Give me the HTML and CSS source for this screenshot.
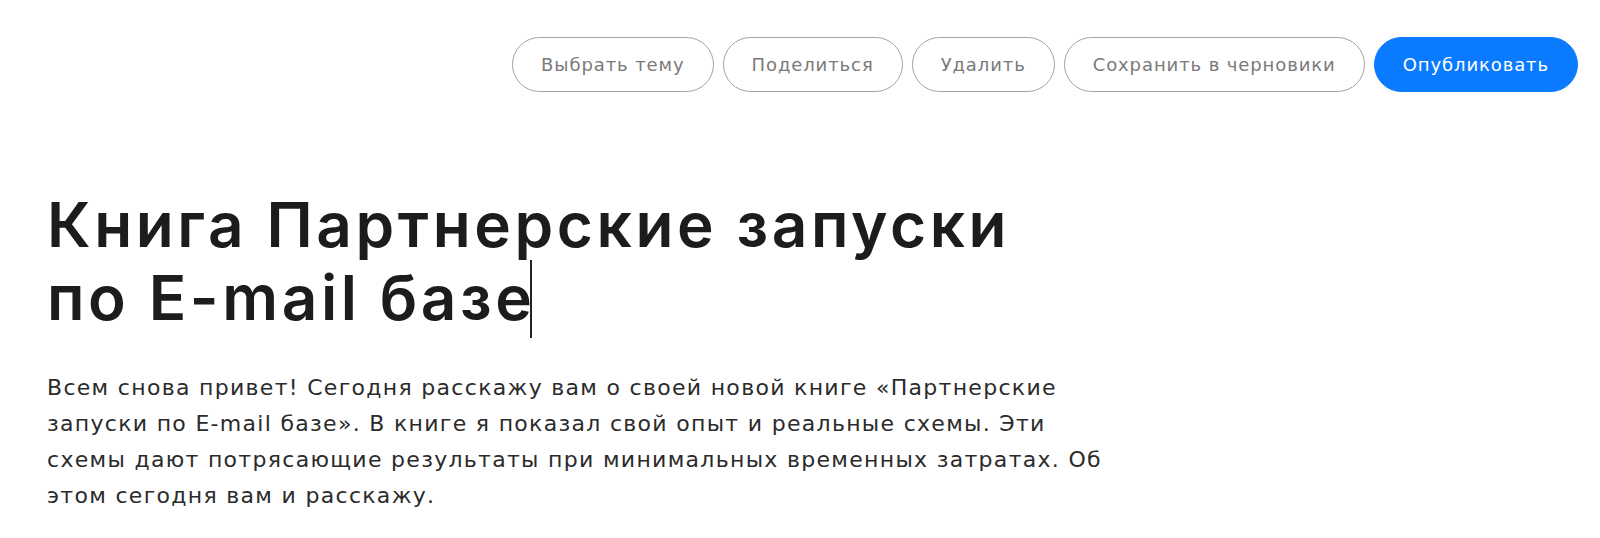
FILE: index.html
```html
<!DOCTYPE html>
<html lang="ru">
<head>
<meta charset="utf-8">
<title>Редактор</title>
<link rel="stylesheet" href="styles.css">
</head>
<body>
<header class="toolbar">
  <button class="btn">Выбрать тему</button>
  <button class="btn">Поделиться</button>
  <button class="btn">Удалить</button>
  <button class="btn">Сохранить в черновики</button>
  <button class="btn btn-primary">Опубликовать</button>
</header>
<main class="article">
  <h1 class="title">Книга Партнерские запуски<br>по E-mail базе<span class="caret"></span></h1>
  <p class="lead">Всем снова привет! Сегодня расскажу вам о своей новой книге «Партнерские запуски по E-mail базе». В книге я показал свой опыт и реальные схемы. Эти схемы дают потрясающие результаты при минимальных временных затратах. Об этом сегодня вам и расскажу.</p>
</main>
</body>
</html>
```
FILE: styles.css
```css
html, body {
  margin: 0;
  padding: 0;
  background: #ffffff;
}
body {
  font-family: "DejaVu Sans", "Liberation Sans", sans-serif;
}
.toolbar {
  display: flex;
  justify-content: flex-end;
  gap: 9px;
  padding: 37px 22px 0 0;
}
.btn {
  height: 55px;
  padding: 0 28px;
  border: 1px solid #a3a3a3;
  border-radius: 28px;
  background: #ffffff;
  color: #7a7a7a;
  font-family: "DejaVu Sans", "Liberation Sans", sans-serif;
  font-size: 18px;
  letter-spacing: 0.9px;
  cursor: pointer;
}
.btn-primary {
  background: #0a7bff;
  border-color: #0a7bff;
  color: #ffffff;
}
.article {
  padding: 0 0 0 47px;
}
.title {
  margin: 98px 0 0 0;
  font-family: Inter, "Noto Sans", sans-serif;
  font-weight: 600;
  font-size: 62px;
  line-height: 70px;
  letter-spacing: 3.6px;
  color: #1c1c1c;
}
.caret {
  display: inline-block;
  width: 2px;
  height: 78px;
  margin-left: -6px;
  background: #222222;
  vertical-align: -18px;
}
.lead {
  margin: 32px 0 0 0;
  max-width: 1075px;
  font-size: 22px;
  line-height: 36px;
  letter-spacing: 1.3px;
  color: #2b2b2b;
}
```
